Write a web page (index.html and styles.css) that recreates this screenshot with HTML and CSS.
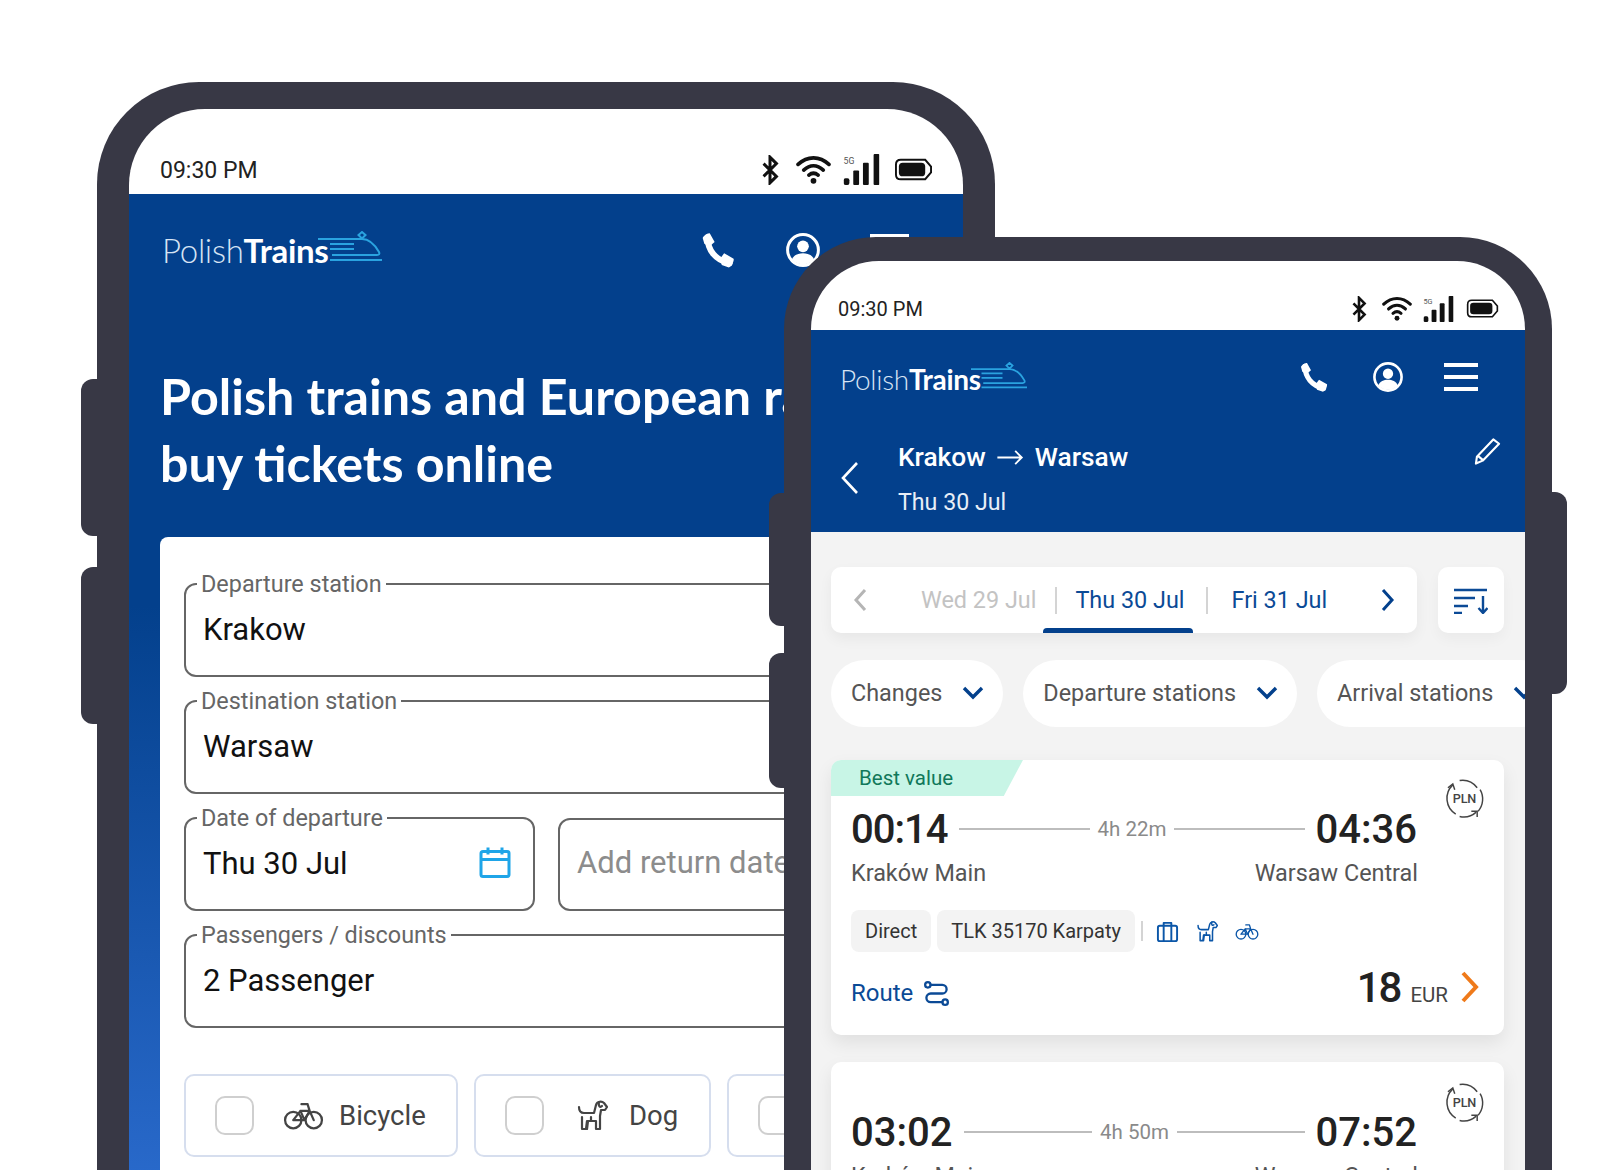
FILE: index.html
```html
<!DOCTYPE html>
<html lang="en">

<head>
    <meta charset="UTF-8">
    <title>PolishTrains</title>
    <link rel="stylesheet" href="styles.css">
</head>

<body>
    <svg class="icon-defs" width="0" height="0">
        <symbol id="i-bluetooth" viewBox="0 0 16 28"><path d="M2 8l12 12-6 6V2l6 6L2 20" fill="none" stroke="currentColor" stroke-width="2.800"/></symbol>
        <symbol id="i-wifi" viewBox="0 0 34 28"><g fill="none" stroke="currentColor" stroke-width="3.600" stroke-linecap="round"><path d="M2 9c9-8.500 21-8.500 30 0"/><path d="M7.500 14.500c6-5.500 13-5.500 19 0"/><path d="M12.500 19.500c3-2.500 6-2.500 9 0"/></g><circle cx="17" cy="25" r="2.800" fill="currentColor"/></symbol>
        <symbol id="i-signal" viewBox="0 0 37 32"><rect x="0" y="25" width="6" height="7" rx="2" fill="currentColor"/><rect x="10" y="17" width="6" height="15" rx="1" fill="currentColor"/><rect x="20" y="9" width="6" height="23" rx="1" fill="currentColor"/><rect x="31" y="0" width="6" height="32" rx="1" fill="currentColor"/></symbol>
        <symbol id="i-battery" viewBox="0 0 40 24"><path d="M7 2h25l6 7v6l-6 7H7c-3 0-5-2-5-5V7c0-3 2-5 5-5z" fill="none" stroke="currentColor" stroke-width="2"/><rect x="5" y="5" width="27" height="14" rx="4" fill="currentColor"/></symbol>
        <symbol id="i-phone" viewBox="0 0 24 24"><path d="M6 4c0 8 5 14.500 14 16.500" fill="none" stroke="currentColor" stroke-width="3.800" stroke-linecap="round"/><path d="M3 4.500C3 3.500 6 1 7.500 1.500L10.500 7 7 10 4 8zM14 17.500l2.500-3.500 6 3.500c.5 1.500-1.500 5-3 5.500l-4.500-1.500z" fill="currentColor"/></symbol>
        <symbol id="i-user" viewBox="0 0 32 32"><circle cx="16" cy="16" r="14.500" fill="none" stroke="currentColor" stroke-width="2.800"/><circle cx="16" cy="12.500" r="5.500" fill="currentColor"/><path d="M5.500 25c2-4.500 6-6 10.500-6s8.500 1.500 10.500 6c-5.500 6-15.500 6-21 0z" fill="currentColor"/></symbol>
        <symbol id="i-train" viewBox="0 0 64 32"><g fill="none" stroke="currentColor" stroke-width="2"><path d="M0 8h44c8 0 13 6 17 13 1 2 0 3-2 3H14"/><path d="M12 13h24M12 18h24"/><path d="M12 29h52"/><path d="M44 1l3.500 3L44 7.500 40.500 4z"/></g></symbol>
        <symbol id="i-bike" viewBox="0 0 40 28"><g fill="none" stroke="currentColor" stroke-width="2.200" stroke-linejoin="round" stroke-linecap="round"><circle cx="10" cy="18.500" r="8"/><circle cx="30" cy="18.500" r="8"/><path d="M10 18.500l7-9h9l4 9M17 9.500l4 9H10M21 18.500l5-9M24 3h-6M24 3l2 6.500"/></g></symbol>
        <symbol id="i-dog" viewBox="0 0 32 32"><g fill="none" stroke="currentColor" stroke-width="2.200" stroke-linejoin="round" stroke-linecap="round"><path d="M3 8c0 4 2 6 5 6h10l2-8c1-4 6-4 8-2l3 4-2 3h-4l-1 6v13h-4v-8h-9l-1 8H6V18"/><path d="M23 3c-1 4 1 6 3 4"/><path d="M12 22l-1 8M15 18v4"/></g></symbol>
        <symbol id="i-bag" viewBox="0 0 24 24"><g fill="none" stroke="currentColor" stroke-width="2" stroke-linejoin="round"><rect x="2" y="6" width="20" height="16" rx="2"/><path d="M8 22V3h8v19"/></g></symbol>
        <symbol id="i-route" viewBox="0 0 26 26"><g fill="none" stroke="currentColor" stroke-width="2.400" stroke-linecap="round"><circle cx="4" cy="4" r="2.800"/><circle cx="22" cy="22" r="2.800"/><path d="M7 4h12a4.500 4.500 0 0 1 0 9H7a4.500 4.500 0 0 0 0 9h12"/></g></symbol>
        <symbol id="i-pln" viewBox="0 0 40 40"><g fill="none" stroke="#444" stroke-width="1.500"><path d="M8 6A19 19 0 0 0 11 36"/><path d="M15 1.500A19 19 0 0 1 33 9"/><path d="M32 34a19 19 0 0 1-17 4.500"/><path d="M36 11a19 19 0 0 1-2 22"/><path d="M3 9l5-4 2 6M27 33h6v6"/></g></symbol>
    </svg>

    <div class="side-btn side-a"></div>
    <div class="side-btn side-b"></div>

    <div class="phone phone-back">
        <div class="screen">
            <div class="status">
                <span class="clock">09:30 PM</span>
                <div class="status-icons">
                    <svg class="ic-bt"><use href="#i-bluetooth"/></svg>
                    <svg class="ic-wifi"><use href="#i-wifi"/></svg>
                    <svg class="ic-signal" viewBox="0 0 37 32"><use href="#i-signal"/><text class="five-g" x="0" y="10">5G</text></svg>
                    <svg class="ic-batt"><use href="#i-battery"/></svg>
                </div>
            </div>
            <div class="hero">
                <div class="topbar">
                    <div class="logo"><span class="logo-light">Polish</span><b>Trains</b><svg class="logo-train"><use href="#i-train"/></svg></div>
                    <div class="top-actions">
                        <svg class="ic-phone"><use href="#i-phone"/></svg>
                        <svg class="ic-user"><use href="#i-user"/></svg>
                        <div class="burger"><i></i><i></i><i></i></div>
                    </div>
                </div>
                <h1>Polish trains and European rail,<br>buy tickets online</h1>
                <div class="search-card">
                    <fieldset class="field"><legend>Departure station</legend>Krakow</fieldset>
                    <fieldset class="field"><legend>Destination station</legend>Warsaw</fieldset>
                    <div class="field-row">
                        <fieldset class="field field-date"><legend>Date of departure</legend>Thu 30 Jul
                            <svg class="ic-cal" viewBox="0 0 32 32"><g fill="none" stroke="currentColor" stroke-width="3"><rect x="2" y="5" width="28" height="25" rx="2"/><path d="M2 13h28M9 1v7M23 1v7"/></g></svg>
                        </fieldset>
                        <div class="field field-return">Add return date</div>
                    </div>
                    <fieldset class="field"><legend>Passengers / discounts</legend>2 Passenger</fieldset>
                    <div class="extras">
                        <div class="extra extra-bike"><span class="check"></span><svg class="ic-extra-bike"><use href="#i-bike"/></svg>Bicycle</div>
                        <div class="extra extra-dog"><span class="check"></span><svg class="ic-extra-dog"><use href="#i-dog"/></svg>Dog</div>
                        <div class="extra extra-more"><span class="check"></span></div>
                    </div>
                </div>
            </div>
        </div>
    </div>

    <div class="side-btn side-c"></div>
    <div class="side-btn side-d"></div>
    <div class="side-btn side-e"></div>

    <div class="phone phone-front">
        <div class="screen">
            <div class="status">
                <span class="clock">09:30 PM</span>
                <div class="status-icons">
                    <svg class="ic-bt"><use href="#i-bluetooth"/></svg>
                    <svg class="ic-wifi"><use href="#i-wifi"/></svg>
                    <svg class="ic-signal" viewBox="0 0 37 32"><use href="#i-signal"/><text class="five-g" x="0" y="10">5G</text></svg>
                    <svg class="ic-batt"><use href="#i-battery"/></svg>
                </div>
            </div>
            <div class="results-head">
                <div class="topbar">
                    <div class="logo"><span class="logo-light">Polish</span><b>Trains</b><svg class="logo-train"><use href="#i-train"/></svg></div>
                    <div class="top-actions">
                        <svg class="ic-phone"><use href="#i-phone"/></svg>
                        <svg class="ic-user"><use href="#i-user"/></svg>
                        <div class="burger"><i></i><i></i><i></i></div>
                    </div>
                </div>
                <div class="trip">
                    <svg class="ic-back" viewBox="0 0 18 34"><path d="M16 2L2 17l14 15" fill="none" stroke="currentColor" stroke-width="2.600"/></svg>
                    <div class="trip-text">
                        <div class="trip-route">Krakow
                            <svg class="ic-arrow" viewBox="0 0 28 16"><path d="M0 8h26M19 1l7 7-7 7" fill="none" stroke="currentColor" stroke-width="2"/></svg>
                            Warsaw</div>
                        <div class="trip-date">Thu 30 Jul</div>
                    </div>
                    <svg class="ic-pencil" viewBox="0 0 28 28"><path d="M20 2l6 4.500L9 24l-7 3 1-7zM4 19l6 5" fill="none" stroke="currentColor" stroke-width="2.200" stroke-linejoin="round"/></svg>
                </div>
            </div>
            <div class="results">
                <div class="date-row">
                    <div class="date-tabs">
                        <svg class="ic-prev" viewBox="0 0 14 24"><path d="M12 2L3 12l9 10" fill="none" stroke="currentColor" stroke-width="3"/></svg>
                        <span class="tab tab-off">Wed 29 Jul</span>
                        <span class="tab-sep"></span>
                        <span class="tab tab-on">Thu 30 Jul</span>
                        <span class="tab-sep"></span>
                        <span class="tab tab-last">Fri 31 Jul</span>
                        <svg class="ic-next" viewBox="0 0 14 24"><path d="M2 2l9 10-9 10" fill="none" stroke="currentColor" stroke-width="3"/></svg>
                    </div>
                    <div class="sort-btn">
                        <svg viewBox="0 0 34 26"><g fill="none" stroke="currentColor" stroke-width="2.400"><path d="M0 2h33M0 10h21M0 18h14M0 25h8M29 8v16M24.500 20l4.500 5 4.500-5"/></g></svg>
                    </div>
                </div>
                <div class="chips">
                    <div class="chip">Changes<svg viewBox="0 0 22 14"><path d="M2 2l9 9 9-9" fill="none" stroke="currentColor" stroke-width="3.400"/></svg></div>
                    <div class="chip">Departure stations<svg viewBox="0 0 22 14"><path d="M2 2l9 9 9-9" fill="none" stroke="currentColor" stroke-width="3.400"/></svg></div>
                    <div class="chip">Arrival stations<svg viewBox="0 0 22 14"><path d="M2 2l9 9 9-9" fill="none" stroke="currentColor" stroke-width="3.400"/></svg></div>
                </div>

                <div class="conn">
                    <div class="best">Best value</div>
                    <svg class="ic-pln" viewBox="0 0 40 40"><use href="#i-pln"/><text class="pln-text" x="20" y="25" textLength="24">PLN</text></svg>
                    <div class="times">
                        <span class="time time-narrow">00:14</span>
                        <span class="line"></span>
                        <span class="dur">4h 22m</span>
                        <span class="line"></span>
                        <span class="time">04:36</span>
                    </div>
                    <div class="stations"><span>Kraków Main</span><span>Warsaw Central</span></div>
                    <div class="tags">
                        <span class="tag">Direct</span>
                        <span class="tag">TLK 35170 Karpaty</span>
                        <span class="tag-sep"></span>
                        <svg class="ic-bag"><use href="#i-bag"/></svg>
                        <svg class="ic-dog"><use href="#i-dog"/></svg>
                        <svg class="ic-bike"><use href="#i-bike"/></svg>
                    </div>
                    <div class="conn-foot">
                        <span class="route">Route<svg class="ic-route"><use href="#i-route"/></svg></span>
                        <span class="price"><b>18</b><small>EUR</small>
                            <svg class="ic-go" viewBox="0 0 20 32"><path d="M3 2l13 14L3 30" fill="none" stroke="currentColor" stroke-width="4"/></svg>
                        </span>
                    </div>
                </div>

                <div class="conn conn-next">
                    <svg class="ic-pln" viewBox="0 0 40 40"><use href="#i-pln"/><text class="pln-text" x="20" y="25" textLength="24">PLN</text></svg>
                    <div class="times">
                        <span class="time">03:02</span>
                        <span class="line"></span>
                        <span class="dur">4h 50m</span>
                        <span class="line"></span>
                        <span class="time">07:52</span>
                    </div>
                    <div class="stations"><span>Kraków Main</span><span>Warsaw Central</span></div>
                </div>
            </div>
        </div>
    </div>
</body>

</html>
```
FILE: styles.css
```css
/* Page */
* {
    box-sizing: border-box;
}

html,
body {
    margin: 0;
    height: 1170px;
    overflow: hidden;
    background: #fff;
    font-family: Roboto, sans-serif;
}

.icon-defs {
    position: absolute;
}

svg {
    display: block;
    flex: none;
}

.five-g {
    font-family: Roboto, sans-serif;
    font-size: 9px;
    fill: #555;
}

.pln-text {
    font-family: Roboto, sans-serif;
    font-size: 13px;
    font-weight: 500;
    fill: #444;
    text-anchor: middle;
}

/* Phones sit on a free canvas */
.phone {
    position: absolute;
    background: #383845;
    border-style: solid;
    border-color: #383845;
    border-bottom: 0;
}

.phone-back {
    left: 97px;
    top: 82px;
    width: 898px;
    height: 1200px;
    border-width: 27px 32px 0;
    border-radius: 102px 102px 0 0;
}

.phone-front {
    left: 784px;
    top: 237px;
    width: 768px;
    height: 1000px;
    border-width: 24px 27px 0;
    border-radius: 92px 92px 0 0;
}

.screen {
    height: 100%;
    background: #fff;
    overflow: hidden;
    display: flex;
    flex-direction: column;
}

.phone-back .screen {
    border-radius: 76px 76px 0 0;
}

.phone-front .screen {
    border-radius: 68px 68px 0 0;
}

.side-btn {
    position: absolute;
    background: #383845;
    border-radius: 12px;
}

.side-a {
    left: 81px;
    top: 379px;
    width: 30px;
    height: 157px;
}

.side-b {
    left: 81px;
    top: 567px;
    width: 30px;
    height: 157px;
}

.side-c {
    left: 769px;
    top: 493px;
    width: 30px;
    height: 133px;
}

.side-d {
    left: 769px;
    top: 653px;
    width: 30px;
    height: 135px;
}

.side-e {
    left: 1537px;
    top: 492px;
    width: 30px;
    height: 202px;
}

/* Status bar */
.status {
    flex: none;
    display: flex;
    align-items: center;
    justify-content: space-between;
    color: #111;
}

.phone-back .status {
    height: 85px;
    padding: 36px 30px 0 31px;
}

.phone-front .status {
    height: 69px;
    padding: 26px 26px 0 27px;
}

.clock {
    color: #222;
}

.phone-back .clock {
    margin-top: 2px;
    font-size: 23px;
}

.phone-front .clock {
    font-size: 20px;
}

.status-icons {
    display: flex;
    align-items: center;
}

.phone-back .ic-bt {
    width: 18px;
    height: 30px;
    margin-right: 17px;
}

.phone-back .ic-wifi {
    width: 35px;
    height: 29px;
    margin-right: 12px;
}

.phone-back .ic-signal {
    width: 37px;
    height: 31px;
    margin-right: 14px;
}

.phone-back .ic-batt {
    width: 39px;
    height: 25px;
}

.phone-front .ic-bt {
    width: 16px;
    height: 26px;
    margin-right: 15px;
}

.phone-front .ic-wifi {
    width: 30px;
    height: 25px;
    margin-right: 11px;
}

.phone-front .ic-signal {
    width: 31px;
    height: 26px;
    margin-right: 12px;
}

.phone-front .ic-batt {
    width: 33px;
    height: 21px;
}

/* Top bar */
.topbar {
    display: flex;
    justify-content: space-between;
    align-items: center;
}

.logo {
    display: flex;
    align-items: center;
    font-family: Lato, sans-serif;
    color: #fff;
    letter-spacing: -0.3px;
}

.logo-light {
    font-weight: 300;
    color: #d7e4f4;
}

.logo-train {
    color: #2aa3e0;
    margin-top: -6px;
}

.phone-back .logo {
    font-size: 33px;
}

.phone-back .logo-train {
    width: 64px;
    height: 32px;
    margin-left: -11px;
}

.phone-front .logo {
    margin-top: 4px;
    font-size: 28px;
}

.phone-front .logo-train {
    width: 56px;
    height: 28px;
    margin-left: -10px;
}

.top-actions {
    display: flex;
    align-items: center;
    color: #fff;
}

.burger {
    display: flex;
    flex-direction: column;
    justify-content: space-between;
}

.burger i {
    display: block;
    height: 4px;
    background: #fff;
}

.phone-back .ic-phone {
    width: 38px;
    height: 38px;
    margin-right: 50px;
}

.phone-back .ic-user {
    width: 34px;
    height: 34px;
    margin-right: 50px;
}

.phone-back .burger {
    width: 39px;
    height: 32px;
}

.phone-front .ic-phone {
    width: 32px;
    height: 32px;
    margin-right: 44px;
}

.phone-front .ic-user {
    width: 30px;
    height: 30px;
    margin-right: 41px;
}

.phone-front .burger {
    width: 34px;
    height: 28px;
}

/* Search screen */
.hero {
    flex: 1;
    background: linear-gradient(180deg, #03408c 0, #03408c 36%, #3172d8 97%);
}

.phone-back .topbar {
    padding: 27px 54px 0 33px;
    height: 84px;
}

h1 {
    margin: 84px 0 0 31px;
    font-family: Lato, sans-serif;
    font-size: 50.200px;
    line-height: 67px;
    font-weight: 700;
    color: #fff;
    white-space: nowrap;
}

.search-card {
    margin: 41px 30px 0 31px;
    padding: 34px 0 0 24px;
    height: 800px;
    background: #fff;
    border-radius: 8px 8px 0 0;
}

.field {
    display: block;
    margin: 0 0 11px;
    padding: 14px 0 0 17px;
    width: 720px;
    height: 106px;
    border: 2px solid #666;
    border-radius: 12px;
    font-size: 31px;
    color: #111;
}

.field legend {
    margin-left: -6px;
    padding: 0 4px;
    font-size: 23.400px;
    line-height: 26px;
    color: #666;
}

.field-row {
    display: flex;
    gap: 23px;
}

.field-date {
    position: relative;
    width: 351px;
}

.ic-cal {
    position: absolute;
    right: 22px;
    top: 15px;
    width: 32px;
    height: 33px;
    color: #1fa5e8;
}

.field-return {
    margin-top: 13px;
    height: 93px;
    width: 340px;
    padding: 24px 0 0 17px;
    color: #8c8c8c;
    white-space: nowrap;
}

.extras {
    display: flex;
    gap: 16px;
    margin-top: 46px;
}

.extra {
    display: flex;
    align-items: center;
    flex: none;
    height: 83px;
    padding-left: 29px;
    border: 2px solid #d6deee;
    border-radius: 10px;
    font-size: 27.500px;
    color: #444;
}

.extra-bike {
    width: 274px;
}

.extra-dog {
    width: 237px;
}

.extra-more {
    width: 200px;
}

.check {
    width: 39px;
    height: 39px;
    border: 2px solid #cfcfcf;
    border-radius: 10px;
}

.ic-extra-bike {
    width: 41px;
    height: 29px;
    margin: 0 15px 0 29px;
    color: #444;
}

.ic-extra-dog {
    width: 32px;
    height: 32px;
    margin: -2px 21px 0 32px;
    color: #444;
}

/* Results screen */
.results-head {
    flex: none;
    height: 202px;
    background: #03408c;
}

.phone-front .topbar {
    padding: 18px 47px 0 29px;
    height: 75px;
}

.trip {
    position: relative;
    display: flex;
    padding: 0 24px 0 30px;
    color: #fff;
}

.ic-back {
    width: 18px;
    height: 34px;
    margin: 56px 39px 0 0;
}

.trip-text {
    flex: 1;
}

.trip-route {
    display: flex;
    align-items: center;
    gap: 11px;
    margin-top: 35px;
    font-size: 26.300px;
    font-weight: 500;
    line-height: 34px;
}

.ic-arrow {
    width: 27px;
    height: 15px;
}

.trip-date {
    margin-top: 13px;
    font-size: 23.200px;
    line-height: 30px;
    color: #e8eef7;
}

.ic-pencil {
    width: 27px;
    height: 28px;
    margin-top: 32px;
}

.results {
    flex: 1;
    padding: 35px 21px 0 20px;
    background: #f3f3f3;
}

.date-row {
    display: flex;
    gap: 21px;
}

.date-tabs {
    position: relative;
    flex: 1;
    display: flex;
    align-items: center;
    height: 66px;
    padding: 0 22px;
    background: #fff;
    border-radius: 10px;
    box-shadow: 0 6px 14px rgba(0, 0, 0, .05);
    font-size: 23.400px;
    color: #0b4a96;
}

/* underline of the selected day */
.date-tabs::after {
    content: "";
    position: absolute;
    left: 212px;
    bottom: 0;
    width: 150px;
    height: 5px;
    background: #03408c;
    border-radius: 4px 4px 0 0;
}

.ic-prev {
    width: 14px;
    height: 24px;
    margin-right: 54px;
    color: #b5b5b5;
}

.tab {
    white-space: nowrap;
}

.tab-off {
    color: #c3c3c3;
}

.tab-sep {
    width: 2px;
    height: 27px;
    margin: 0 18px 0 19px;
    background: #d4d4d4;
}

.tab-on {
    margin-right: 2px;
}

.tab-last {
    margin-left: 6px;
}

.ic-next {
    width: 14px;
    height: 24px;
    margin-left: auto;
    color: #03408c;
}

.sort-btn {
    flex: none;
    width: 66px;
    height: 66px;
    padding: 21px 16px;
    background: #fff;
    border-radius: 10px;
    box-shadow: 0 6px 14px rgba(0, 0, 0, .04);
    color: #0b4a96;
}

.chips {
    display: flex;
    gap: 20px;
    margin-top: 27px;
}

.chip {
    display: flex;
    align-items: center;
    flex: none;
    gap: 20px;
    height: 67px;
    padding: 0 19px 2px 20px;
    background: #fff;
    border-radius: 34px;
    font-size: 23.400px;
    color: #555;
    white-space: nowrap;
}

.chip svg {
    width: 22px;
    height: 14px;
    color: #03408c;
}

.conn {
    position: relative;
    margin-top: 33px;
    height: 275px;
    padding: 46px 20px 0;
    background: #fff;
    border-radius: 10px;
    box-shadow: 0 8px 18px rgba(0, 0, 0, .08);
}

.conn-next {
    margin-top: 27px;
    padding-top: 47px;
}

.best {
    position: absolute;
    left: 0;
    top: 0;
    width: 192px;
    height: 36px;
    padding-left: 28px;
    background: #c8f5e6;
    clip-path: polygon(0 0, 100% 0, 90% 100%, 0 100%);
    border-radius: 10px 0 0 0;
    font-size: 20.500px;
    line-height: 36px;
    color: #11785a;
}

.ic-pln {
    position: absolute;
    right: 20px;
    top: 19px;
    width: 39px;
    height: 39px;
}

.conn-next .ic-pln {
    top: 21px;
}

.times {
    display: flex;
    align-items: center;
    width: 566px;
    height: 46px;
}

.time {
    font-size: 40px;
    font-weight: 500;
    color: #222;
}

.time-narrow {
    letter-spacing: -1px;
}

.line {
    flex: 1;
    height: 2px;
    margin: 0 8px;
    background: #bdbdbd;
}

.time + .line {
    margin-left: 12px;
}

.dur + .line {
    margin-right: 11px;
}

.dur {
    font-size: 20.500px;
    color: #8a8a8a;
}

.stations {
    display: flex;
    justify-content: space-between;
    width: 567px;
    margin-top: 6px;
    font-size: 23.400px;
    line-height: 30px;
    color: #555;
}

.tags {
    display: flex;
    align-items: center;
    gap: 6px;
    margin-top: 22px;
}

.tag {
    height: 42px;
    padding: 0 14px;
    background: #f3f3f3;
    border-radius: 8px;
    font-size: 20px;
    line-height: 42px;
    color: #333;
}

.tag-sep {
    width: 2px;
    height: 20px;
    background: #d4d4d4;
}

.ic-bag {
    width: 23px;
    height: 23px;
    margin: 0 11px 0 7px;
    color: #0b56a8;
}

.ic-dog {
    width: 22px;
    height: 22px;
    margin-right: 11px;
    color: #0b56a8;
}

.ic-bike {
    width: 24px;
    height: 17px;
    color: #0b56a8;
}

.conn-foot {
    display: flex;
    justify-content: space-between;
    align-items: center;
    margin-top: 7px;
    height: 56px;
}

.route {
    display: flex;
    align-items: center;
    gap: 11px;
    font-size: 24px;
    margin-top: 12px;
    color: #0b4a96;
}

.ic-route {
    width: 25px;
    height: 25px;
}

.price {
    display: flex;
    align-items: center;
    margin-right: 4px;
    color: #222;
}

.price b {
    font-size: 42px;
    font-weight: 500;
    letter-spacing: -2px;
}

.price small {
    margin: 16px 12px 0 10px;
    font-size: 20.500px;
    color: #444;
}

.ic-go {
    width: 20px;
    height: 32px;
    color: #ef7a1a;
}
```
